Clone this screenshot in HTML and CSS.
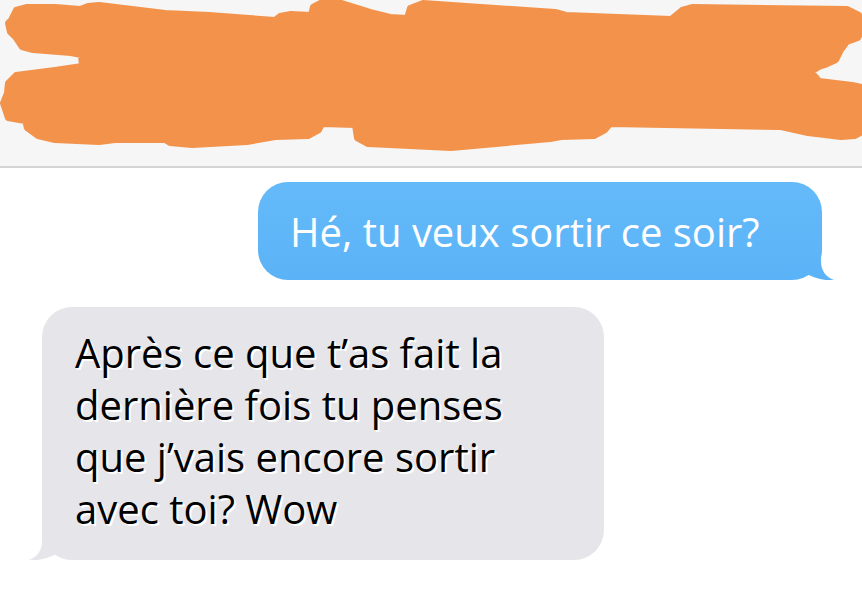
FILE: index.html
```html
<!DOCTYPE html>
<html lang="fr">
<head>
<meta charset="UTF-8">
<meta name="viewport" content="width=device-width, initial-scale=1.0">
<title>Messages</title>
<link rel="stylesheet" href="styles.css">
</head>
<body>

<header class="top-bar">
  <!-- redacted contact name -->
  <svg class="scribble" viewBox="0 0 862 166" preserveAspectRatio="none">
    <path d="M11,20 L16,10 L27,7 L55,7 L80,9 L88,6 L99,5 L165,13 L209,15 L275,20 L280,16 L291,14 L311,15 L313,7 L324,1 L335,1 L374,13 L390,17 L407,18 L410,8 L423,3 L555,12 L566,15 L671,19 L682,10 L693,7 L847,9 L859,15 L862,30 L858,38 L847,42 L841,50 L836,60 L825,65 L819,67 L811,72 L816,77 L819,81 L852,85 L862,87 L862,132 L855,136 L841,137 L808,133 L781,127 L610,124 L605,130 L594,136 L561,137 L550,139 L451,148 L368,144 L357,138 L355,125 L322,124 L319,130 L308,136 L275,137 L247,142 L192,145 L170,143 L165,140 L115,140 L99,142 L55,140 L38,136 L27,128 L25,121 L8,118 L3,103 L7,93 L8,83 L16,75 L55,70 L82,66 L81,55 L71,53 L33,50 L22,47 L16,38 L10,32 L8,23 Z"/>
  </svg>
</header>

<main class="thread">
  <div class="bubble sent">
    <p>Hé, tu veux sortir ce soir?</p>
    <svg class="tail" viewBox="0 0 45 31">
      <defs>
        <linearGradient id="sentTail" x1="0" y1="0" x2="0" y2="1">
          <stop offset="0" stop-color="#5eb5f8"/>
          <stop offset="1" stop-color="#5bb3f7"/>
        </linearGradient>
      </defs>
      <path fill="url(#sentTail)" d="M31,0 L31,12 C31,22 36,28 44,31 C36,32 24,30 14,23 C10,27 5,30 0,30 L0,0 Z"/>
    </svg>
  </div>
  <div class="bubble received">
    <p>Après ce que t’as fait la dernière fois tu penses que j’vais encore sortir avec toi? Wow</p>
    <svg class="tail" viewBox="0 0 45 31"><path d="M14,0 L14,12 C14,22 9,28 1,31 C9,32 21,30 31,23 C35,27 40,30 45,30 L45,0 Z"/></svg>
  </div>
</main>

</body>
</html>
```

FILE: styles.css
```css
body {
  font-family: "Open Sans", "Noto Sans", sans-serif;
  background-color: #fff;
  margin: 0;
  padding: 0;
}

.top-bar {
  height: 166px;
  background-color: #f6f6f6;
  border-bottom: 2px solid #d4d4d4;
}
.scribble {
  display: block;
  width: 100%;
  height: 100%;
}
.scribble path {
  fill: #f2924b;
  stroke: #f2924b;
  stroke-width: 6;
  stroke-linejoin: round;
}

.thread {
  display: flex;
  flex-direction: column;
  gap: 27px;
  padding: 14px 40px 0 42px;
}
.bubble {
  position: relative;
  box-sizing: border-box;
  border-radius: 30px;
}
.bubble p {
  margin: 0;
  font-size: 40px;
}
.tail {
  position: absolute;
  bottom: 0;
  width: 45px;
  height: 31px;
}

.sent {
  align-self: flex-end;
  width: 564px;
  height: 98px;
  display: flex;
  align-items: center;
  padding: 0 32px;
  background: linear-gradient(#64baf9, #5bb3f7);
  color: #fff;
}
.sent .tail {
  right: -13px;
}

.received {
  align-self: flex-start;
  width: 562px;
  height: 253px;
  padding: 20px 33px;
  background-color: #e5e5ea;
  color: #000;
}
.received p {
  line-height: 52px;
  text-shadow: 1px 1px 0 #fff, 2px 2px 0 #fff;
}
.received .tail {
  left: -14px;
}
.received .tail path {
  fill: #e5e5ea;
}
```
